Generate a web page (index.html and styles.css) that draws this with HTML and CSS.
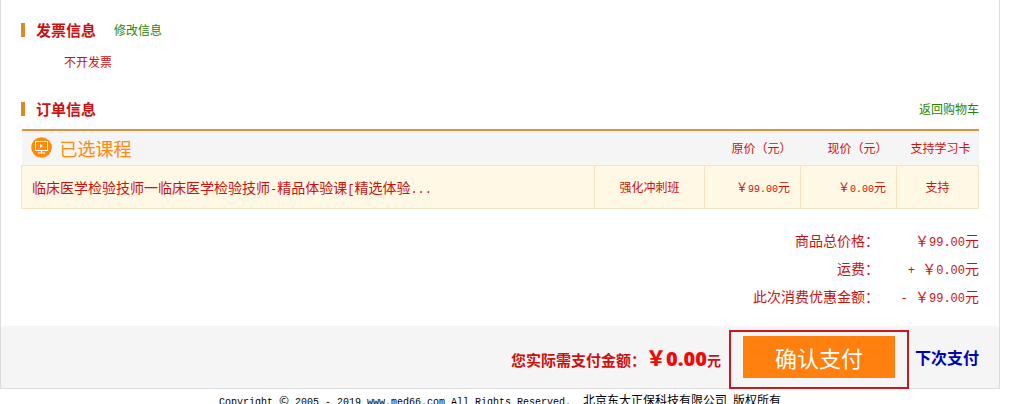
FILE: index.html
```html
<!DOCTYPE html>
<html lang="zh-CN">
<head>
    <meta charset="UTF-8">
    <meta name="viewport" content="width=device-width, initial-scale=1.0">
    <title>订单信息</title>
    <link rel="stylesheet" href="styles.css">
</head>
<body>
    <main class="order">
        <!-- Invoice -->
        <section class="block">
            <div class="block-head">
                <h2>发票信息</h2>
                <a class="green" href="#">修改信息</a>
            </div>
            <p class="invoice">不开发票</p>
        </section>

        <!-- Order -->
        <section class="block">
            <div class="block-head">
                <h2>订单信息</h2>
                <a class="green back" href="#">返回购物车</a>
            </div>

            <table class="courses">
                <colgroup>
                    <col>
                    <col class="col-class">
                    <col class="col-price">
                    <col class="col-price">
                    <col class="col-card">
                </colgroup>
                <thead>
                    <tr>
                        <th colspan="2" class="chosen">
                            <div class="chosen-title">
                                <svg width="21" height="21" viewBox="0 0 21 21" aria-hidden="true">
                                    <circle cx="10.5" cy="10.5" r="10.3" fill="#ff8a0c"/>
                                    <rect x="4.5" y="4.5" width="12" height="9" fill="none" stroke="#fff"/>
                                    <path d="M9 7l3 2-3 2z" fill="#fff"/>
                                    <path d="M10 14h1v2h-1zM7 15.5h7v1H7z" fill="#fff"/>
                                </svg>
                                已选课程
                            </div>
                        </th>
                        <th>原价（元）</th>
                        <th>现价（元）</th>
                        <th class="card">支持学习卡</th>
                    </tr>
                </thead>
                <tbody>
                    <tr>
                        <td class="name">临床医学检验技师一临床医学检验技师<span class="num">-</span>精品体验课<span class="num">[</span>精选体验<span class="num">...</span></td>
                        <td>强化冲刺班</td>
                        <td class="price">￥<span class="num-sm">99.00</span>元</td>
                        <td class="price">￥<span class="num-sm">0.00</span>元</td>
                        <td>支持</td>
                    </tr>
                </tbody>
            </table>

            <dl class="totals">
                <dt>商品总价格：</dt>
                <dd>￥<span class="num">99.00</span>元</dd>
                <dt>运费：</dt>
                <dd><span class="num">+ </span>￥<span class="num">0.00</span>元</dd>
                <dt>此次消费优惠金额：</dt>
                <dd><span class="num">- </span>￥<span class="num">99.00</span>元</dd>
            </dl>
        </section>

        <!-- Payment bar -->
        <div class="pay-bar">
            <p class="due">您实际需支付金额：<strong>￥0.00</strong><span class="unit">元</span></p>
            <div class="confirm">
                <button type="button">确认支付</button>
            </div>
            <a class="later" href="#">下次支付</a>
        </div>
    </main>

    <footer class="footer">
        <span class="num-sm">Copyright </span>©<span class="num-sm"> 2005 - 2019 www.med66.com All Rights Reserved.&nbsp; </span>北京东大正保科技有限公司<span class="num-sm"> </span>版权所有
    </footer>
</body>
</html>
```

FILE: styles.css
```css
* {
    box-sizing: border-box;
}

body {
    margin: 0;
    font-family: "Noto Sans CJK SC", sans-serif;
    font-size: 12px;
    line-height: 18px;
    color: #cc1111;
    background-color: #fff;
}

h2, p, dl, dd {
    margin: 0;
}

a {
    text-decoration: none;
}

.order {
    max-width: 1000px;
    border: 1px solid #ddd;
    border-top: none;
}

.block {
    padding: 20px 20px 0;
}

.block-head {
    display: flex;
    align-items: center;
    gap: 18px;
    height: 20px;
}

.block-head::before {
    content: "";
    width: 4px;
    height: 14px;
    margin-right: -7px;
    background-color: #dc8a24;
}

h2 {
    font-size: 15px;
    line-height: 20px;
}

.green {
    color: #2c8205;
}

.back {
    margin-left: auto;
}

.invoice {
    padding: 13px 0 8px 43px;
}

/* Half-width characters, smaller so they take half of a Chinese one */
.num,
.num-sm {
    font-family: "Liberation Mono", monospace;
    line-height: 1;
    white-space: pre;
}

.num {
    font-size: 12px;
}

.num-sm {
    font-size: 10px;
}

/* Course table */
.courses {
    width: 100%;
    margin-top: 10px;
    table-layout: fixed;
    border-collapse: collapse;
    border-top: 2px solid #dd9339;
}

.col-class {
    width: 110px;
}

.col-price {
    width: 96px;
}

.col-card {
    width: 82px;
}

.courses th {
    height: 35px;
    padding: 0 9px 0 0;
    font-weight: normal;
    text-align: right;
    background-color: #f5f5f5;
}

.courses th.card {
    padding-right: 8px;
}

.courses th.chosen {
    padding: 0 0 0 9px;
    text-align: left;
}

.chosen-title {
    display: flex;
    align-items: center;
    gap: 8px;
    font-size: 18px;
    color: #ff8a0c;
}

.courses td {
    height: 43px;
    padding: 0;
    text-align: center;
    background-color: #fff8e5;
    border: 1px solid #f5e2c4;
}

.courses td.name {
    padding-left: 10px;
    font-size: 14px;
    text-align: left;
}

.courses td.price {
    padding-right: 10px;
    text-align: right;
}

.totals {
    display: grid;
    grid-template-columns: 1fr 100px;
    padding: 17px 0 16px;
    font-size: 14px;
    line-height: 28px;
    text-align: right;
}

/* Payment bar */
.pay-bar {
    display: flex;
    align-items: center;
    justify-content: flex-end;
    gap: 6px;
    height: 62px;
    padding: 6px 20px 0 0;
    background-color: #f5f5f5;
}

.due {
    padding-right: 2px;
    font-size: 15px;
    font-weight: bold;
    line-height: 28px;
}

.due strong {
    font-family: "Open Sans", "Noto Sans CJK SC", sans-serif;
    font-size: 20px;
    line-height: 1;
    color: #ee0a0a;
}

.unit {
    font-size: 14px;
}

.confirm {
    padding: 4px 12px 9px;
    border: 2px solid #c81a1e;
}

.confirm button {
    display: block;
    width: 152px;
    height: 42px;
    padding: 0;
    border: none;
    font-family: inherit;
    font-size: 22px;
    color: #fff;
    background-color: #ff800f;
    cursor: pointer;
}

.later {
    padding-bottom: 6px;
    font-size: 16px;
    font-weight: bold;
    color: #0000b4;
}

.footer {
    max-width: 1000px;
    padding-top: 2px;
    text-align: center;
    color: #000;
}
```
